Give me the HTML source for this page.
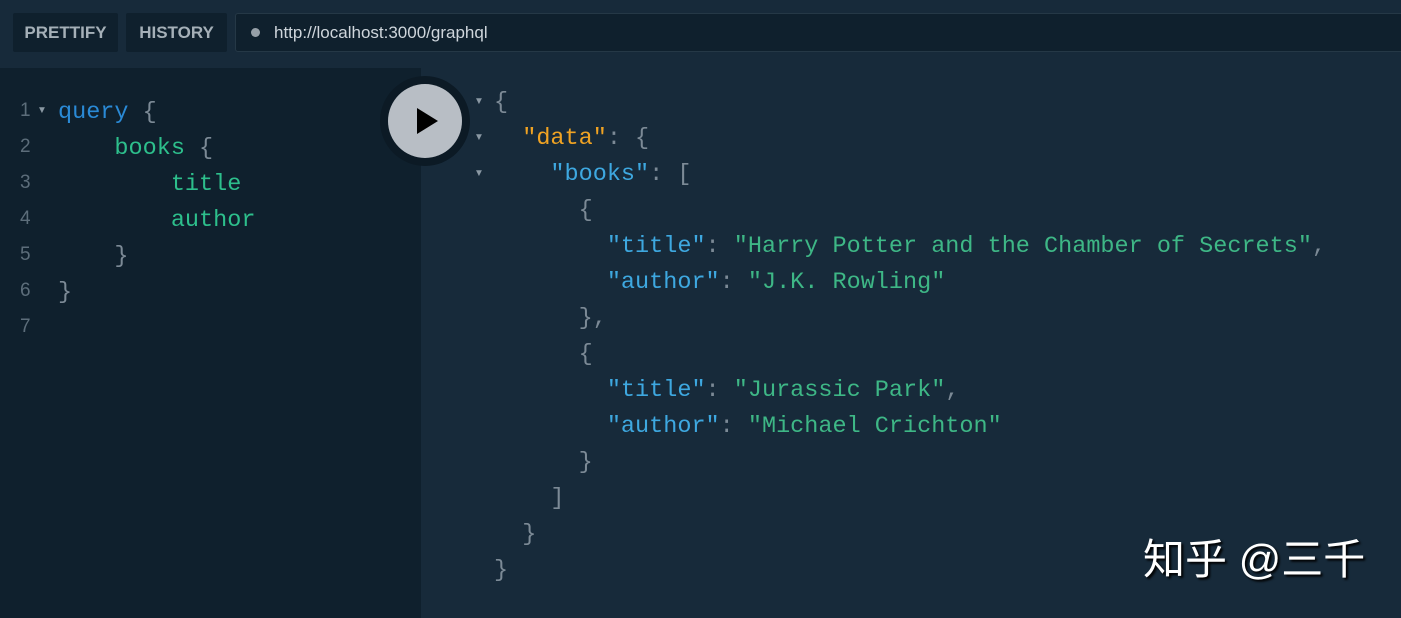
<!DOCTYPE html>
<html><head><meta charset="utf-8"><style>
*{margin:0;padding:0;box-sizing:border-box}
body{width:1401px;height:618px;overflow:hidden;background:#172a3a;position:relative;font-family:"Liberation Sans",sans-serif}
.top{position:absolute;left:0;top:0;width:1401px;height:68px;background:#172a3a}
.btn{position:absolute;top:13px;height:39px;background:#0f202d;color:#a5b0b8;font-weight:bold;font-size:17px;line-height:39px;text-align:center;border-radius:2px}
.url{position:absolute;left:235px;top:13px;width:1180px;height:39px;background:#0f202d;border:1px solid #253846;border-radius:3px;color:#cfd6dc;font-size:17px;line-height:37px;padding-left:38px}
.url:before{content:"";position:absolute;left:15px;top:14px;width:9px;height:9px;border-radius:50%;background:#96a0a8}
.left{position:absolute;left:0;top:68px;width:421px;height:550px;background:#0f202d}
.code{position:absolute;font-family:"Liberation Mono",monospace;font-size:23.5px;white-space:pre;line-height:36px}
.ln{position:absolute;left:20px;color:#5c6d7a;font-size:19px;line-height:36px}
.arr{position:absolute;color:#8a98a3;font-size:10px}
.b{color:#2a8ad6}.g{color:#2dbf8c}.p{color:#7c8a96}.o{color:#f0a323}.s{color:#3eb786}.k{color:#3ea8e0}
.play{position:absolute;left:380px;top:76px;width:90px;height:90px;border-radius:50%;background:#0c1a25}
.play i{position:absolute;left:8px;top:8px;width:74px;height:74px;border-radius:50%;background:#b8bec5}
.wm{position:absolute;left:1143px;top:526px;color:#fff;font-size:42px;font-family:"Liberation Sans","Noto Sans CJK SC",sans-serif;text-shadow:2px 2px 2px #000}
</style></head><body>
<div class="top"></div>
<div class="btn" style="left:13px;width:105px">PRETTIFY</div>
<div class="btn" style="left:126px;width:101px">HISTORY</div>
<div class="url">http://localhost:3000/graphql</div>
<div class="left"></div>
<div class="ln" style="top:93px">1</div>
<div class="ln" style="top:129px">2</div>
<div class="ln" style="top:165px">3</div>
<div class="ln" style="top:201px">4</div>
<div class="ln" style="top:237px">5</div>
<div class="ln" style="top:273px">6</div>
<div class="ln" style="top:309px">7</div>
<div class="arr" style="left:37px;top:105px">▼</div>
<div class="code" style="left:58px;top:95px"><span class="b">query</span> <span class="p">{</span>
    <span class="g">books</span> <span class="p">{</span>
        <span class="g">title</span>
        <span class="g">author</span>
    <span class="p">}</span>
<span class="p">}</span></div>
<div class="play"><i><svg width="74" height="74" viewBox="0 0 74 74"><path d="M29 24 L50 37 L29 50 Z" fill="#000"/></svg></i></div>
<div class="arr" style="left:474px;top:96px">▼</div>
<div class="arr" style="left:474px;top:132px">▼</div>
<div class="arr" style="left:474px;top:168px">▼</div>
<div class="code" style="left:494px;top:85px"><span class="p">{</span>
  <span class="o">"data"</span><span class="p">: {</span>
    <span class="k">"books"</span><span class="p">: [</span>
      <span class="p">{</span>
        <span class="k">"title"</span><span class="p">:</span> <span class="s">"Harry Potter and the Chamber of Secrets"</span><span class="p">,</span>
        <span class="k">"author"</span><span class="p">:</span> <span class="s">"J.K. Rowling"</span>
      <span class="p">},</span>
      <span class="p">{</span>
        <span class="k">"title"</span><span class="p">:</span> <span class="s">"Jurassic Park"</span><span class="p">,</span>
        <span class="k">"author"</span><span class="p">:</span> <span class="s">"Michael Crichton"</span>
      <span class="p">}</span>
    <span class="p">]</span>
  <span class="p">}</span>
<span class="p">}</span></div>
<div class="wm">知乎 @三千</div>
</body></html>
